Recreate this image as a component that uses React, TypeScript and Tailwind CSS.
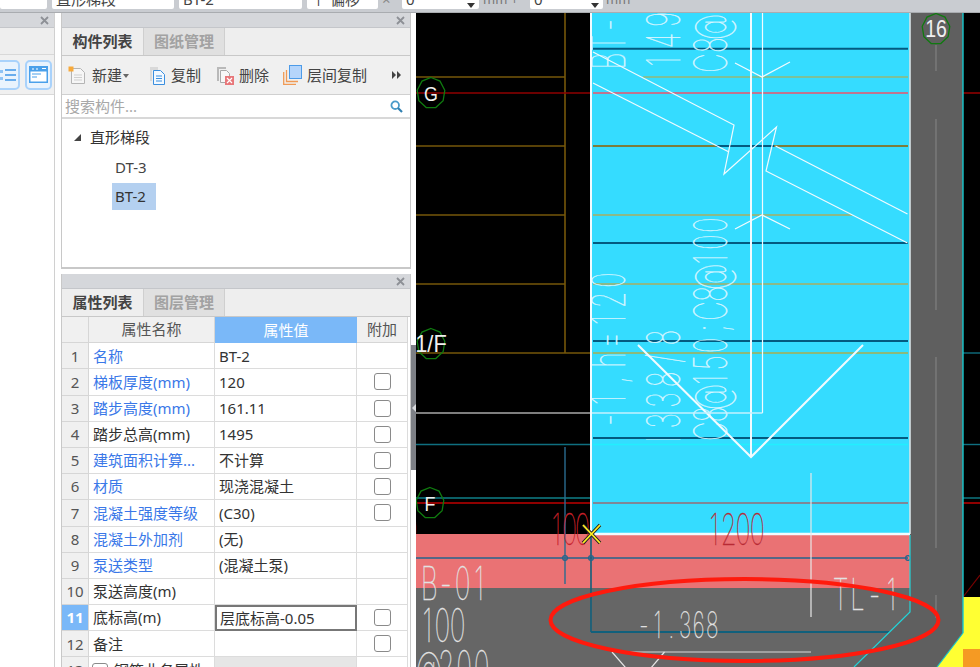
import type { ReactNode } from "react";

const rows = [
  { no: "1", name: "名称", blue: true, value: "BT-2", check: false },
  { no: "2", name: "梯板厚度(mm)", blue: true, value: "120", check: true },
  { no: "3", name: "踏步高度(mm)", blue: true, value: "161.11", check: true },
  { no: "4", name: "踏步总高(mm)", blue: false, value: "1495", check: true },
  { no: "5", name: "建筑面积计算...", blue: true, value: "不计算", check: true },
  { no: "6", name: "材质", blue: true, value: "现浇混凝土", check: true },
  { no: "7", name: "混凝土强度等级", blue: true, value: "(C30)", check: true },
  { no: "8", name: "混凝土外加剂", blue: true, value: "(无)", check: false },
  { no: "9", name: "泵送类型", blue: true, value: "(混凝土泵)", check: false },
  { no: "10", name: "泵送高度(m)", blue: false, value: "", check: false },
  { no: "11", name: "底标高(m)", blue: false, value: "层底标高-0.05", check: true },
  { no: "12", name: "备注", blue: false, value: "", check: true },
];

function Close() {
  return (
    <svg width="9" height="9" viewBox="0 0 9 9" className="text-[#8d9096]">
      <path d="M1 1l7 7M8 1l-7 7" stroke="currentColor" strokeWidth="1.8" />
    </svg>
  );
}

function TitleBar() {
  return (
    <div className="h-[15px] bg-[#d5d7db] border-b border-[#c4c6ca] flex items-center justify-end pr-[5px]">
      <Close />
    </div>
  );
}

function Tabs({ active, other }: { active: string; other: string }) {
  return (
    <div className="h-[28px] bg-[#eeeeee] border-b border-[#c8c8c8] flex">
      <div className="w-[81px] text-center text-[15px] leading-[27px] font-bold text-[#444]">{active}</div>
      <div className="w-[82px] text-center text-[15px] leading-[27px] font-bold text-[#a2a2a2] bg-[#e0e0e0] border-x border-[#cfcfcf]">
        {other}
      </div>
    </div>
  );
}

function Tool({ icon, label, className }: { icon: ReactNode; label: string; className: string }) {
  return (
    <div className={`flex items-center gap-[5px] ${className}`}>
      {icon}
      <span className="text-[15px] leading-[20px] text-[#444]">{label}</span>
    </div>
  );
}

function TopBox({ className, text, arrow }: { className: string; text: string; arrow?: boolean }) {
  return (
    <div className={`h-[9px] bg-white rounded-b-[2px] overflow-hidden flex justify-between pl-[4px] pr-[4px] ${className}`}>
      <span className="-mt-[11px] text-[15px] leading-[20px] text-[#444] whitespace-nowrap">{text}</span>
      {arrow && <span className="w-0 h-0 mt-[3px] border-x-[4px] border-x-transparent border-t-[5px] border-t-[#333]" />}
    </div>
  );
}

function Drawing() {
  // CAD lettering: thin glyphs squeezed, each centred in a fixed-pitch cell
  const cad = (text: string, x: number, y: number, size: number, pitch: number, color: string, vertical = false) => {
    const sx = 0.58;
    const cell = pitch / sx;
    const xs = Array.from(text, (_, i) => ((i + 0.5) * cell).toFixed(1)).join(" ");
    return (
      <text
        key={text + x + y}
        transform={`translate(${x} ${y}) ${vertical ? "rotate(-90)" : ""} scale(${sx} 1)`}
        x={xs}
        textAnchor="middle"
        fontFamily="Inter, 'Liberation Sans', sans-serif"
        fontWeight="100"
        fontSize={size}
        fill={color}
        stroke={color}
        strokeWidth="0.4"
      >
        {text}
      </text>
    );
  };
  const bubble = (label: string, cx: number, cy: number, size: number, sx: number) => {
    const pts = Array.from({ length: 9 }, (_, i) => {
      const a = (i / 9) * Math.PI * 2 - Math.PI / 2;
      return `${cx + Math.cos(a) * 14},${cy + Math.sin(a) * 15.5}`;
    }).join(" ");
    return (
      <g key={label}>
        <polygon points={pts} fill="none" stroke="#0f7a0f" strokeWidth="1.3" />
        <text
          transform={`translate(${cx} ${cy + size * 0.36}) scale(${sx} 1)`}
          textAnchor="middle"
          fontFamily="'Liberation Sans', sans-serif"
          fontSize={size}
          fill="#f0f0f0"
        >
          {label}
        </text>
      </g>
    );
  };
  const line = (x1: number, y1: number, x2: number, y2: number, color: string, w = 1) => (
    <line key={`${x1}-${y1}-${x2}-${y2}`} x1={x1} y1={y1} x2={x2} y2={y2} stroke={color} strokeWidth={w} />
  );
  const white = "#f2fbff";
  const hollow = "#d8f6ff";

  return (
    <svg width="564" height="654" viewBox="416 13 564 654" className="block bg-black shrink-0">
      <defs>
        <clipPath id="stair-text">
          <rect x="592" y="13" width="316" height="427" />
        </clipPath>
      </defs>

      {/* black side lines */}
      {[77, 146, 215, 284].map((y) => line(416, y, 565, y, "#76570a", 1.6))}
      {line(565, 13, 565, 353, "#76570a", 1.6)}
      {line(416, 353, 591, 353, "#76570a", 1.4)}
      {line(416, 93, 591, 93, "#8f0000", 1.6)}
      {line(416, 444.5, 591, 444.5, "#0f6f80", 1.4)}
      {line(416, 498, 591, 498, "#0f7f88", 1.4)}
      {line(416, 503, 591, 503, "#8f0000", 2)}
      {line(963, 93, 980, 93, "#8f0000", 1.6)}
      {line(963, 503, 980, 503, "#8f0000", 2)}
      {line(963, 353, 980, 353, "#0f6f80", 1.4)}
      {line(963, 444.5, 980, 444.5, "#0f6f80", 1.4)}
      {line(963, 498, 980, 498, "#0f7f88", 1.4)}
      {line(963, 597, 980, 575, "#7a0000", 1.2)}

      {/* grey slab, wall strip, yellow corner */}
      <rect x="416" y="588" width="494" height="79" fill="#666666" />
      <polygon points="910,13 963,13 963,633 937,667 854,667 910,612" fill="#5f5f5f" />
      <polygon points="963,597 980,597 980,667 937,667 963,633" fill="#ffff33" />
      <rect x="963" y="649" width="17" height="18" fill="#f59a23" />
      {line(963, 13, 963, 633, "#17c9cf", 1.4)}
      {line(963, 633, 937, 667, "#17c9cf", 1.2)}
      {[
        [45, 71],
        [119, 310],
        [357, 548],
        [595, 618],
      ].map(([a, b]) => line(936, a, 936, b, "#7c7c7c", 1.4))}

      {/* stair flight */}
      <rect x="591" y="13" width="319" height="521" fill="#35dcff" />
      <rect x="416" y="534" width="494" height="54" fill="#ea7274" />
      {[48.7, 243, 341, 438].map((y) => line(593, y, 908, y, "#035a80", 2))}
      {line(716, 146, 774, 146, "#035a80", 2)}
      {line(593, 146, 716, 146, "#7c7d3c", 2)}
      {line(774, 146, 908, 146, "#7c7d3c", 2)}
      {line(643, 77, 908, 77, "#93b878", 1.6)}
      {line(593, 215, 852, 215, "#a8ae62", 1.6)}
      {line(593, 284, 908, 284, "#a8ae62", 1.6)}
      {line(593, 353, 908, 353, "#a8ae50", 1.6)}
      {line(593, 93, 908, 93, "#bf7590", 1.8)}
      {line(593, 503, 908, 503, "#7f8797", 2)}
      {line(593, 444.5, 908, 444.5, "#22eeff", 1.4)}

      <g clipPath="url(#stair-text)">
        {cad("BT-2", 625, 70, 46, 18, hollow, true)}
        {cad("1495", 680, 72, 46, 21, hollow, true)}
        {cad("C8@", 727, 72, 46, 18, hollow, true)}
        {cad("D -1,h=120", 625, 470, 46, 20, hollow, true)}
        {cad("1338/8", 680, 452, 46, 20.8, hollow, true)}
        {cad("C8@150;C8@100", 727, 440, 46, 17.2, hollow, true)}
      </g>

      <polyline points="593,52 734,125 724,174 776.5,127 766,171 907.5,243" fill="none" stroke={white} strokeWidth="1.2" />
      <polyline points="593,83 729,152" fill="none" stroke={white} strokeWidth="1.2" />
      <polyline points="775.5,146 907.5,214" fill="none" stroke={white} strokeWidth="1.2" />
      <polyline points="735,63 762,77 790,62" fill="none" stroke={white} strokeWidth="1.2" />
      <polyline points="735,229 762,215 790,229" fill="none" stroke={white} strokeWidth="1.2" />
      {line(751, 13, 751, 457, white, 2)}
      {line(762.5, 13, 762.5, 413, white, 1.2)}
      <polyline points="638,345 751,457 863,345" fill="none" stroke={white} strokeWidth="2" />
      {line(416, 413, 591, 413, "#a8a8a8", 1.6)}
      {line(591, 413, 762.5, 413, "#c4f2ff", 1.6)}

      {/* outline of the flight */}
      {line(591, 13, 591, 534, white, 2)}
      {line(910, 13, 910, 534, "#d8e4e8", 1.6)}
      {line(591, 534, 910, 534, white, 2.4)}

      {/* landing and axis lines */}
      {line(416, 558, 908, 558, "#23648c", 1.4)}
      {line(565, 447, 565, 584, "#2a6c90", 1.4)}
      {line(591, 534, 591, 632, "#11607c", 1.6)}
      {line(591, 632, 890, 632, "#11607c", 1.8)}
      {[565, 591, 908].map((x) => (
        <circle key={x} cx={x} cy={558} r="2.4" fill="none" stroke="#23648c" strokeWidth="1.2" />
      ))}
      <polyline points="910,535 910,612 854,667" fill="none" stroke="#22d4d8" strokeWidth="1.2" />
      {line(811, 473, 811, 617, "#e8e8e8", 1.2)}
      {line(628, 652, 811, 652, "#d8d8d8", 1.2)}
      <polyline points="612,652 632,675" fill="none" stroke="#e8e8e8" strokeWidth="1.2" />
      <polyline points="664.5,652 645,675" fill="none" stroke="#e8e8e8" strokeWidth="1.2" />

      {cad("0", 403, 545, 44, 14, "#c8202a")}
      {cad("100", 550, 545, 44, 13, "#c8202a")}
      {cad("1200", 707, 545, 44, 14.4, "#b82a34")}
      {cad("B-01", 421, 600, 46, 16.6, "#e2e2e2")}
      {cad("100", 420, 642, 46, 15, "#e2e2e2")}
      {cad("@200", 420, 684, 46, 17.6, "#e2e2e2")}
      {cad("-1.368", 637, 638, 36, 13.7, "#e2e2e2")}
      {cad("TL-1", 832, 610, 44, 17, "#e2e2e2")}

      {bubble("G", 431, 93, 21, 0.85)}
      {bubble("1/F", 431, 344, 23, 0.95)}
      {bubble("F", 430, 503, 21, 0.85)}
      {bubble("16", 936, 29, 23, 0.85)}

      {/* snap marker */}
      <path d="M583 525l17 18M600 525l-17 18" stroke="#222" strokeWidth="3.4" />
      <path d="M583 525l17 18M600 525l-17 18" stroke="#ffee22" strokeWidth="1.8" />

      <ellipse cx="744.5" cy="620" rx="194" ry="41" fill="none" stroke="#ff1a0d" strokeWidth="4" />
    </svg>
  );
}

export default function App() {
  return (
    <div className="w-[980px] h-[667px] overflow-hidden bg-white font-['Noto_Sans','Noto_Sans_CJK_SC',sans-serif]">
      {/* top option bar, cut off by the crop */}
      <div className="h-[13px] bg-[#c9ccd1] border-b border-[#a9acb0] flex">
        <TopBox className="w-[47px]" text="" />
        <TopBox className="w-[122px] ml-[5px]" text="直形梯段" />
        <TopBox className="w-[123px] ml-[5px]" text="BT-2" />
        <TopBox className="w-[71px] ml-[5px]" text="↑ 偏移" />
        <span className="ml-[4px] w-[20px] h-[9px] overflow-hidden">
          <span className="block -mt-[11px] text-[15px] leading-[20px] text-[#888]">×</span>
        </span>
        <TopBox className="w-[77px]" text="0" arrow />
        <span className="ml-[4px] w-[47px] h-[9px] overflow-hidden">
          <span className="block -mt-[11px] text-[13px] leading-[20px] text-[#777]">mm +</span>
        </span>
        <TopBox className="w-[73px]" text="0" arrow />
        <span className="ml-[3px] w-[40px] h-[9px] overflow-hidden">
          <span className="block -mt-[11px] text-[13px] leading-[20px] text-[#777]">mm</span>
        </span>
      </div>

      <div className="flex h-[654px]">
        {/* left module panel */}
        <div className="w-[55px] shrink-0 border-r border-[#d0d0d0]">
          <TitleBar />
          <div className="h-[27px] bg-[#eeeeee] border-b border-[#d8d8d8]" />
          <div className="h-[40px] bg-[#f0f0f0] border-b border-[#d8d8d8] flex items-center justify-end gap-[5px] pr-[2px]">
            <div className="w-[26px] h-[30px] rounded-[5px] border-2 border-[#a9d2fb] bg-[#e9f3fd] flex items-center justify-center shrink-0">
              <svg width="20" height="16" viewBox="0 0 20 16">
                <path d="M1 3h5v3H1zM1 10h5v3H1z" fill="#8fc3f5" />
                <path d="M8 3h11M8 8h11M8 13h11" stroke="#3f97e8" strokeWidth="1.4" />
              </svg>
            </div>
            <div className="w-[27px] h-[30px] rounded-[5px] border-2 border-[#a9d2fb] bg-[#e9f3fd] flex items-center justify-center shrink-0">
              <svg width="19" height="17" viewBox="0 0 19 17">
                <rect width="19" height="17" fill="#4aa0ea" />
                <rect x="1.5" y="5.5" width="16" height="10" fill="#fff" />
                <path d="M3 8h9M3 11h5" stroke="#4aa0ea" strokeWidth="1.2" />
                <path d="M3 3h2M7 3h2M13 2.5h4" stroke="#fff" strokeWidth="1.2" />
              </svg>
            </div>
          </div>
        </div>

        {/* component and property panels */}
        <div className="w-[350px] shrink-0 ml-[6px] flex flex-col">
          <div className="h-[256px] border-x border-b-2 border-[#c8c8c8] shrink-0">
            <TitleBar />
            <Tabs active="构件列表" other="图纸管理" />
            <div className="h-[39px] bg-[#f0f0f0] border-b border-[#d0d0d0] flex items-center pl-[6px] relative">
              <Tool
                className="w-[81px]"
                label="新建"
                icon={
                  <svg width="19" height="19" viewBox="0 0 19 19">
                    <path d="M3.5 2.5h9l4 4v11h-13z" fill="#f6f6f6" stroke="#b5b5b5" />
                    <path d="M6 9h8M6 11.5h8M6 14h8" stroke="#cfcfcf" />
                    <rect x="0.5" y="0.5" width="5" height="5" fill="#f7a93a" />
                  </svg>
                }
              />
              <span className="absolute left-[61px] top-[18px] w-0 h-0 border-x-[3px] border-x-transparent border-t-[4px] border-t-[#666]" />
              <Tool
                className="w-[67px]"
                label="复制"
                icon={
                  <svg width="17" height="19" viewBox="0 0 17 19">
                    <path d="M1 1h8v3H3v11H1z" fill="#d9d9d9" />
                    <path d="M4.5 4.5h7l4 4v10h-11z" fill="#f3f9ff" stroke="#3b8fdf" />
                    <path d="M7 10h6M7 12.5h6M7 15h6" stroke="#3b8fdf" />
                  </svg>
                }
              />
              <Tool
                className="w-[67px]"
                label="删除"
                icon={
                  <svg width="18" height="19" viewBox="0 0 18 19">
                    <path d="M1 1h9v2H3v12H1z" fill="#b9b9b9" />
                    <path d="M4.5 4.5h6l3 3v9h-9z" fill="#f7f7f7" stroke="#a8a8a8" />
                    <rect x="9" y="10" width="9" height="9" fill="#e8777a" />
                    <path d="M11 12l5 5M16 12l-5 5" stroke="#fff" strokeWidth="1.2" />
                  </svg>
                }
              />
              <Tool
                className="w-[107px]"
                label="层间复制"
                icon={
                  <svg width="19" height="20" viewBox="0 0 19 20">
                    <path d="M.7 7v12.3H13M3.5 5v11.5H15" fill="none" stroke="#f09a55" strokeWidth="1.3" />
                    <rect x="6.5" y="0.5" width="12" height="13" fill="#b5d5fb" stroke="#4d9be8" />
                  </svg>
                }
              />
              <svg width="9" height="8" viewBox="0 0 9 8" className="ml-[2px]">
                <path d="M0 0l4 4-4 4zM5 0l4 4-4 4z" fill="#444" />
              </svg>
            </div>
            <div className="h-[24px] border-b-2 border-[#d8d8d8] flex items-center justify-between pl-[3px] pr-[7px]">
              <span className="text-[15px] leading-[20px] text-[#a8a8a8]">搜索构件...</span>
              <svg width="13" height="13" viewBox="0 0 13 13">
                <circle cx="5.2" cy="5.2" r="3.8" fill="none" stroke="#4a9bc9" strokeWidth="1.8" />
                <path d="M8 8l4 4" stroke="#2f7fb0" strokeWidth="2.2" />
              </svg>
            </div>
            <div className="pt-[3px]">
              <div className="h-[30px] flex items-center pl-[12px]">
                <span className="w-0 h-0 border-b-[7px] border-b-[#444] border-l-[7px] border-l-transparent" />
                <span className="ml-[9px] text-[15px] leading-[20px] text-[#333]">直形梯段</span>
              </div>
              <div className="h-[30px] flex items-center pl-[53px] text-[15px] text-[#444]">DT-3</div>
              <div className="ml-[50px] mt-[1px] w-[44px] h-[27px] bg-[#b4d0f0] flex items-center pl-[3px] text-[15px] text-[#333]">BT-2</div>
            </div>
          </div>

          <div className="mt-[5px] flex-1 border-x border-[#c8c8c8] overflow-hidden">
            <TitleBar />
            <Tabs active="属性列表" other="图层管理" />
            <div className="grid grid-cols-[27px_126px_142px_51px] auto-rows-[26.2px] text-[15px] text-[#333]">
              <div className="bg-[#f0f0f0] border-r border-b border-[#d6d6d6]" />
              <div className="bg-[#f0f0f0] border-r border-b border-[#d6d6d6] flex items-center justify-center text-[#555]">属性名称</div>
              <div className="bg-[#7ab8f8] flex items-center justify-center text-white">属性值</div>
              <div className="bg-[#f0f0f0] border-r border-b border-[#d6d6d6] flex items-center justify-center text-[#555]">附加</div>
              {rows.map((r) => (
                <div key={r.no} className="contents">
                  <div
                    className={
                      r.no === "11"
                        ? "bg-[#7ab8f8] border-r border-b border-[#d6d6d6] flex items-center justify-center text-white font-bold"
                        : "bg-[#f0f0f0] border-r border-b border-[#d6d6d6] flex items-center justify-center text-[#555]"
                    }
                  >
                    {r.no}
                  </div>
                  <div className={`border-r border-b border-[#dcdcdc] flex items-center pl-[4px] whitespace-nowrap ${r.blue ? "text-[#3a78e8]" : "text-[#333]"}`}>
                    {r.name}
                  </div>
                  <div
                    className={
                      r.no === "11"
                        ? "border-2 border-[#777] flex items-center pl-[3px] whitespace-nowrap"
                        : "border-r border-b border-[#dcdcdc] flex items-center pl-[4px] whitespace-nowrap"
                    }
                  >
                    {r.value}
                  </div>
                  <div className="border-r border-b border-[#dcdcdc] flex items-center justify-center">
                    {r.check && <span className="w-[17px] h-[17px] rounded-[3px] border border-[#8a8a8a] bg-white" />}
                  </div>
                </div>
              ))}
              <div className="bg-[#f0f0f0] border-r border-[#d6d6d6] flex items-center justify-center text-[#555]">13</div>
              <div className="border-r border-[#dcdcdc] flex items-center pl-[3px] gap-[6px] whitespace-nowrap">
                <span className="w-[16px] h-[16px] rounded-[3px] border border-[#8a8a8a] bg-white" />
                <span>钢筋业务属性</span>
              </div>
              <div className="bg-[#e6e6e6] border-r border-[#dcdcdc]" />
              <div className="border-r border-[#dcdcdc]" />
            </div>
          </div>
        </div>

        {/* splitter */}
        <div className="w-[5px] shrink-0 flex flex-col">
          <div className="h-[332px] shrink-0" />
          <div className="h-[125px] bg-[#7d8086] flex items-center justify-center">
            <span className="w-0 h-0 border-y-[4px] border-y-transparent border-r-[4px] border-r-[#d8dadd]" />
          </div>
        </div>

        <Drawing />
      </div>
    </div>
  );
}
